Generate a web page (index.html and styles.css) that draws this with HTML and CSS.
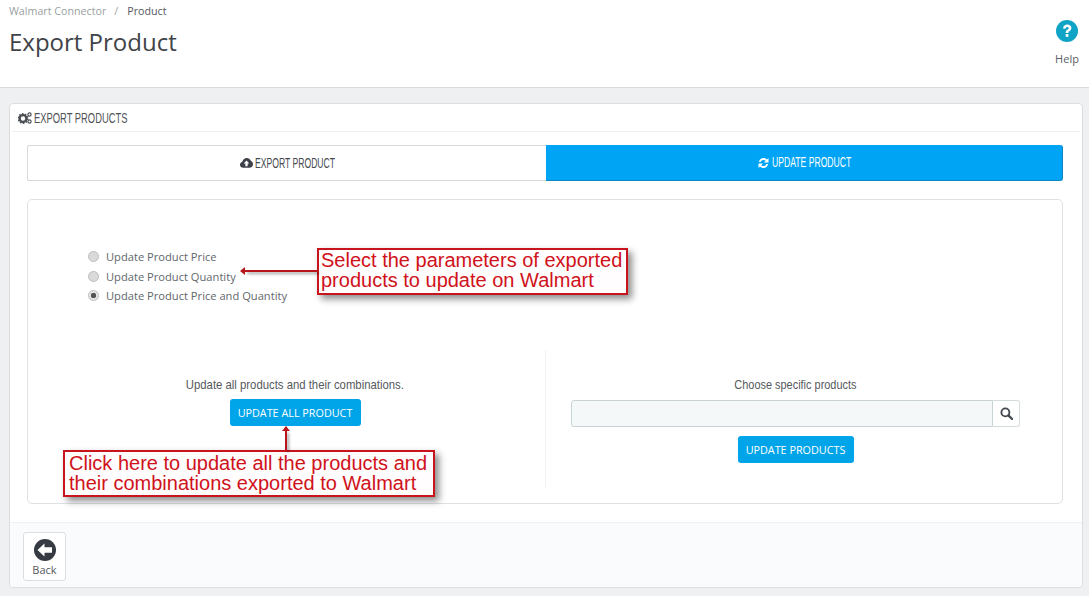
FILE: index.html
```html
<!DOCTYPE html>
<html lang="en">
<head>
<meta charset="utf-8">
<title>Export Product</title>
<link rel="stylesheet" href="styles.css">
</head>
<body>
<header class="page-head">
  <div class="head-left">
    <nav class="crumbs"><span class="crumb-link">Walmart Connector</span><span class="crumb-sep">/</span><span class="crumb-cur">Product</span></nav>
    <h1 class="title">Export Product</h1>
  </div>
  <div class="help">
    <svg class="help-icon" viewBox="0 0 22 22"><circle cx="11" cy="11" r="11" fill="#0fa3c6"/><path d="M7 8.400C7.300 5.900 9 4.500 11.300 4.500C13.700 4.500 15.400 6 15.400 8C15.400 9.700 14.400 10.500 13.300 11.200C12.500 11.700 12.300 12 12.300 12.900H9.700C9.700 11.200 10.200 10.500 11.400 9.700C12.300 9.100 12.700 8.800 12.700 8.100C12.700 7.400 12.100 6.900 11.300 6.900C10.400 6.900 9.800 7.500 9.600 8.800Z" fill="#fff"/><rect x="9.700" y="14" width="2.700" height="2.800" fill="#fff"/></svg>
    <span class="help-label">Help</span>
  </div>
</header>
<main class="panel">
  <div class="panel-head">
    <svg class="gears" viewBox="0 0 14 12"><circle cx="5" cy="6.500" r="3.400" fill="none" stroke="#4a4f55" stroke-width="2.400"/><circle cx="5" cy="6.500" r="4.800" fill="none" stroke="#4a4f55" stroke-width="1.400" stroke-dasharray="1.500 1.500"/><circle cx="11.500" cy="2.500" r="1.600" fill="none" stroke="#4a4f55" stroke-width="1.200"/><circle cx="11.500" cy="9.500" r="1.600" fill="none" stroke="#4a4f55" stroke-width="1.200"/></svg>
    <span class="narrow narrow-head">EXPORT PRODUCTS</span>
  </div>
  <div class="panel-body">
    <div class="tabs">
      <div class="tab">
        <svg class="tab-icon" viewBox="0 0 14 11"><path d="M3.500 10.500C1.500 10.500 0 9.200 0 7.300C0 5.800 1 4.600 2.400 4.300C2.800 1.900 4.800 0 7.300 0C9.500 0 11.300 1.400 11.900 3.400C13.200 3.900 14 5.200 14 6.800C14 8.900 12.400 10.500 10.300 10.500Z" fill="#3c4147"/><path d="M7 2.800L10 6H8.200V9H5.800V6H4Z" fill="#fff"/></svg>
        <span class="narrow narrow-tab">EXPORT PRODUCT</span>
      </div>
      <div class="tab tab-active">
        <svg class="tab-icon" viewBox="0 0 12 12"><path d="M1.400 5C1.900 2.500 3.800 1 6 1C7.400 1 8.700 1.600 9.500 2.500L11 1V5.500H6.500L8.200 3.800C7.600 3.200 6.800 2.900 6 2.900C4.600 2.900 3.500 3.700 3.200 5ZM10.600 7C10.100 9.500 8.200 11 6 11C4.600 11 3.300 10.400 2.500 9.500L1 11V6.500H5.500L3.800 8.200C4.400 8.800 5.200 9.100 6 9.100C7.400 9.100 8.500 8.300 8.800 7Z" fill="#fff"/></svg>
        <span class="narrow narrow-tab">UPDATE PRODUCT</span>
      </div>
    </div>
    <section class="box">
      <div class="options">
        <label class="option"><span class="radio"></span>Update Product Price</label>
        <label class="option"><span class="radio"></span>Update Product Quantity</label>
        <label class="option"><span class="radio radio-on"></span>Update Product Price and Quantity</label>
      </div>
      <div class="columns">
        <div class="col">
          <p class="col-label narrow">Update all products and their combinations.</p>
          <button class="btn" type="button">UPDATE ALL PRODUCT</button>
        </div>
        <div class="col col-right">
          <p class="col-label narrow">Choose specific products</p>
          <div class="search">
            <div class="search-input"></div>
            <div class="search-btn"><svg class="search-icon" viewBox="0 0 14 14"><circle cx="5.800" cy="5.800" r="4.300" fill="none" stroke="#44494f" stroke-width="2"/><path d="M9 9L13 13" stroke="#44494f" stroke-width="2.400" stroke-linecap="round"/></svg></div>
          </div>
          <button class="btn" type="button">UPDATE PRODUCTS</button>
        </div>
      </div>
    </section>
  </div>
  <footer class="panel-foot">
    <div class="back">
      <svg class="back-icon" viewBox="0 0 22 22"><circle cx="11" cy="11" r="11" fill="#363a42"/><path d="M3.500 11L10.500 4.500V8.200H18V13.800H10.500V17.500Z" fill="#fff"/></svg>
      <span>Back</span>
    </div>
  </footer>
</main>

<div class="note note-params">Select the parameters of exported<br>products to update on Walmart</div>
<div class="arrow arrow-left"></div>
<div class="note note-all">Click here to update all the products and<br>their combinations exported to Walmart</div>
<div class="arrow arrow-up"></div>
</body>
</html>
```

FILE: styles.css
```css
* { box-sizing: border-box; }
html, body { margin: 0; height: 596px; overflow: hidden; }
body { background: #eef0f1; font-family: "Open Sans", sans-serif; color: #555; position: relative; }

.narrow { font-family: "Liberation Sans", sans-serif; display: inline-block; white-space: nowrap; transform-origin: left center; }
.narrow-head { width: 93px; font-size: 14px; transform: scaleX(.67); }
.narrow-tab { width: 80px; font-size: 14px; margin-top: -1px; transform: scaleX(.615); }

.page-head { height: 88px; background: #fff; border-bottom: 1px solid #d9dbdc; display: flex; justify-content: space-between; padding: 0 10px 0 9px; }
.crumbs { font-size: 10.700px; line-height: 15px; padding-top: 4px; white-space: nowrap; }
.crumb-link { color: #9a9fa3; }
.crumb-sep { color: #9a9fa3; margin: 0 9px 0 8px; }
.crumb-cur { color: #555a5f; }
.title { margin: 7px 0 0; font-size: 24px; line-height: 32px; font-weight: 400; color: #3f4448; }

.help { width: 24px; display: flex; flex-direction: column; align-items: center; padding-top: 20px; font-size: 11px; color: #5c6166; }
.help-icon { width: 22px; height: 22px; flex: none; }
.help-label { margin-top: 9px; line-height: 16px; }

.panel { margin: 15px 6px 0 9px; height: 485px; background: #fff; border: 1px solid #dcdee0; border-radius: 4px; display: flex; flex-direction: column; }
.panel-head { height: 28px; margin: 0 2px; border-bottom: 1px solid #eef0f1; display: flex; align-items: center; gap: 2px; padding-left: 6px; color: #4f5458; }
.gears { width: 14px; height: 12px; }

.panel-body { flex: 1; padding: 13px 19px 0 17px; }
.tabs { display: grid; grid-template-columns: 519px 517px; height: 36px; }
.tab { display: flex; align-items: center; justify-content: center; gap: 2px; border: 1px solid #d7d9db; border-right: 0; color: #44494e; border-radius: 2px 0 0 2px; }
.tab-icon { width: 13px; height: 12px; }
.tab-active { background: #00a4f5; border: 1px solid #0c86c4; border-width: 0 1px 1px 0; color: #fff; border-radius: 0 3px 3px 0; }

.box { margin-top: 18px; height: 305px; border: 1px solid #dfe1e3; border-radius: 5px; padding: 47px 17px 0; }
.options { display: flex; flex-direction: column; padding-left: 43px; font-size: 11.150px; color: #62676b; }
.option { display: flex; align-items: center; gap: 7px; height: 19.500px; }
.radio { width: 11px; height: 11px; border-radius: 50%; background: #dadada; border: 1px solid #bdbdbd; display: block; }
.radio-on { background: radial-gradient(circle, #555 0 2.500px, #e4e4e4 3px); }

.columns { display: grid; grid-template-columns: 500px 500px; margin-top: 44px; height: 139px; }
.col { display: flex; flex-direction: column; align-items: center; padding-top: 27px; }
.col-right { border-left: 1px solid #eff1f2; padding-left: 25px; padding-right: 25px; }
.col-label { margin: 0 0 7px; font-size: 13.500px; line-height: 15px; color: #55595d; transform-origin: center; transform: scaleX(.84); }
.col-right .col-label { transform: scaleX(.81); }
.btn { font-family: "Open Sans", sans-serif; font-size: 10.800px; color: #fff; background: #00a4e8; border: 0; border-radius: 3px; height: 27px; width: 131px; padding: 0; line-height: 27px; white-space: nowrap; }
.col-right .btn { width: 116px; }

.search { display: flex; width: 449px; height: 27px; margin: 1px 0 9px; }
.search-input { flex: 1; background: #f4f8f8; border: 1px solid #c9d3d5; border-radius: 3px 0 0 3px; }
.search-btn { width: 27px; border: 1px solid #d3dbdd; border-left: 0; border-radius: 0 3px 3px 0; display: flex; align-items: center; justify-content: center; }
.search-icon { width: 13px; height: 13px; }

.panel-foot { height: 65px; background: #fafbfc; border-top: 1px solid #eef0f1; padding: 9px 13px; border-radius: 0 0 4px 4px; }
.back { width: 43px; height: 49px; background: #fff; border: 1px solid #dcdfe1; border-radius: 3px; display: flex; flex-direction: column; align-items: center; padding-top: 6px; font-size: 11px; color: #55595d; }
.back-icon { width: 22px; height: 22px; flex: none; }
.back span { line-height: 15px; margin-top: 1px; }

.note { position: absolute; background: #fffdfd; border: 2px solid #c8141d; color: #d0121b; font-family: "Liberation Sans", sans-serif; font-size: 20px; line-height: 20px; box-shadow: 4px 4px 7px rgba(0,0,0,.45); white-space: nowrap; }
.note-params { left: 317px; top: 248px; width: 311px; height: 47px; padding: 0 2px; }
.note-all { left: 63px; top: 450px; width: 372px; height: 47px; padding: 1px 4px; }
.arrow { position: absolute; background: #b8141c; box-shadow: 2px 2px 3px rgba(0,0,0,.4); }
.arrow-left { left: 245px; top: 270px; width: 72px; height: 2px; }
.arrow-left::before { content: ""; position: absolute; left: -5px; top: -3px; border: 4px solid transparent; border-left: 0; border-right: 5px solid #b8141c; }
.arrow-up { left: 285px; top: 431px; width: 2px; height: 19px; }
.arrow-up::before { content: ""; position: absolute; left: -3px; top: -5px; border: 4px solid transparent; border-top: 0; border-bottom: 5px solid #b8141c; }
```
